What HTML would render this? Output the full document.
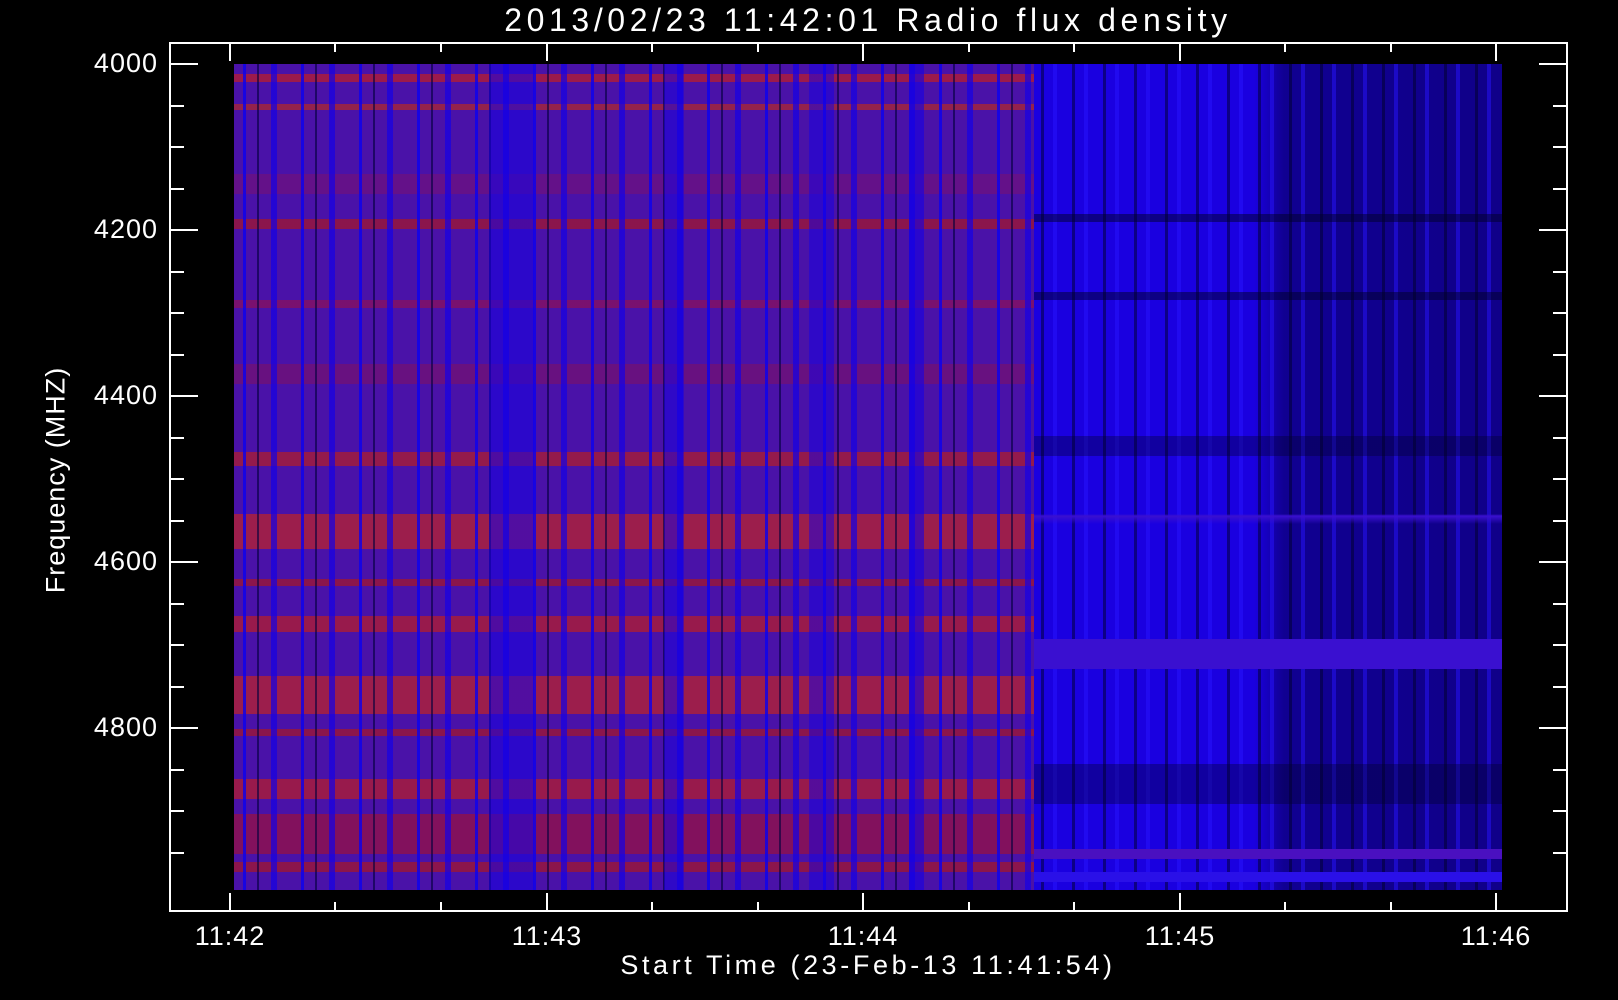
<!DOCTYPE html>
<html><head><meta charset="utf-8"><style>
html,body{margin:0;padding:0;background:#000;width:1618px;height:1000px;overflow:hidden;font-family:"Liberation Sans",sans-serif;color:#fff}
.t{position:absolute;white-space:nowrap;font-size:27px;letter-spacing:1px}
#img{position:absolute;left:234px;top:64px;width:1268px;height:826px;overflow:hidden;background:#3e10c0}
#L{position:absolute;left:0;top:0;width:800px;height:826px;background:#4a12a8}
#R{position:absolute;left:800px;top:0;width:468px;height:826px;background:#1a00e0}
.lay{position:absolute;left:0;top:0;width:100%;height:100%}
</style></head><body>
<div class="t" style="left:0;width:1736px;text-align:center;top:2px;font-size:32px;letter-spacing:4.6px">2013/02/23 11:42:01 Radio flux density</div>

<div id="img">
 <div id="L">
  <div class="lay" style="background:linear-gradient(180deg,transparent 0,transparent 10px,#e02000 10px,#e02000 18px,transparent 18px,transparent 40px,#d03000 40px,#d03000 46px,transparent 46px,transparent 110px,#7a1070 110px,#7a1070 130px,transparent 130px,transparent 155px,#c01800 155px,#c01800 165px,transparent 165px,transparent 236px,#a01040 236px,#a01040 244px,transparent 244px,transparent 300px,#801060 300px,#801060 320px,transparent 320px,transparent 388px,#d02000 388px,#d02000 402px,transparent 402px,transparent 450px,#e02800 450px,#e02800 485px,transparent 485px,transparent 515px,#c01800 515px,#c01800 522px,transparent 522px,transparent 552px,#d82000 552px,#d82000 568px,transparent 568px,transparent 612px,#e02800 612px,#e02800 650px,transparent 650px,transparent 665px,#c01800 665px,#c01800 672px,transparent 672px,transparent 715px,#d82000 715px,#d82000 735px,transparent 735px,transparent 750px,#b01020 750px,#b01020 790px,transparent 790px,transparent 798px,#c01800 798px,#c01800 808px,transparent 808px);opacity:.55"></div>
  <div class="lay" style="background:repeating-linear-gradient(90deg,transparent 0,transparent 9px,rgba(10,0,240,.8) 9px,rgba(10,0,240,.8) 12px,transparent 12px,transparent 23px,rgba(0,0,60,.6) 23px,rgba(0,0,60,.6) 25px,transparent 25px,transparent 37px,rgba(20,0,230,.7) 37px,rgba(20,0,230,.7) 43px,transparent 43px,transparent 58px)"></div>
  <div class="lay" style="background:linear-gradient(90deg,transparent 0,transparent 255px,rgba(20,0,230,.55) 255px,rgba(20,0,230,.55) 300px,transparent 300px,transparent 430px,rgba(20,0,230,.5) 430px,rgba(20,0,230,.5) 450px,transparent 450px,transparent 575px,rgba(20,0,230,.5) 575px,rgba(20,0,230,.5) 600px,transparent 600px,transparent 675px,rgba(20,0,230,.6) 675px,rgba(20,0,230,.6) 690px,transparent 690px)"></div>
 </div>
 <div id="R">
  <div class="lay" style="background:linear-gradient(90deg,transparent 0,transparent 220px,rgba(5,0,50,.45) 250px,rgba(5,0,50,.5) 468px)"></div>
  <div class="lay" style="background:repeating-linear-gradient(90deg,transparent 0,transparent 7px,rgba(0,0,40,.5) 7px,rgba(0,0,40,.5) 10px,transparent 10px,transparent 19px,rgba(40,20,255,.5) 19px,rgba(40,20,255,.5) 23px,transparent 23px,transparent 31px)"></div>
  <div class="lay" style="background:linear-gradient(180deg,transparent 0,transparent 150px,rgba(0,0,40,.5) 150px,rgba(0,0,40,.5) 158px,transparent 158px,transparent 228px,rgba(0,0,40,.5) 228px,rgba(0,0,40,.5) 236px,transparent 236px,transparent 372px,rgba(0,0,40,.35) 372px,rgba(0,0,40,.35) 392px,transparent 392px,transparent 450px,#3a10d0 452px,transparent 460px,transparent 575px,#3a10d0 575px,#3a10d0 605px,transparent 605px,transparent 700px,rgba(0,0,40,.35) 700px,rgba(0,0,40,.35) 740px,transparent 740px,transparent 785px,#4a10c0 785px,#4a10c0 795px,transparent 795px,transparent 808px,#2a10e8 808px,#2a10e8 818px,transparent 818px)"></div>
 </div>
</div>

<svg width="1618" height="1000" style="position:absolute;left:0;top:0">
<g stroke="#fff" stroke-width="2" fill="none">
<rect x="170" y="43" width="1397" height="868"/>
<path d="M170 64h28M170 230h28M170 396h28M170 562h28M170 728h28M1567 64h-28M1567 230h-28M1567 396h-28M1567 562h-28M1567 728h-28
M170 106h14M170 147h14M170 189h14M170 272h14M170 313h14M170 355h14M170 438h14M170 479h14M170 521h14M170 604h14M170 645h14M170 687h14M170 770h14M170 811h14M170 853h14
M1567 106h-14M1567 147h-14M1567 189h-14M1567 272h-14M1567 313h-14M1567 355h-14M1567 438h-14M1567 479h-14M1567 521h-14M1567 604h-14M1567 645h-14M1567 687h-14M1567 770h-14M1567 811h-14M1567 853h-14
M230 43v18M547 43v18M863 43v18M1180 43v18M1496 43v18M230 911v-18M547 911v-18M863 911v-18M1180 911v-18M1496 911v-18
M335 43v9M441 43v9M652 43v9M758 43v9M969 43v9M1074 43v9M1285 43v9M1391 43v9
M335 911v-9M441 911v-9M652 911v-9M758 911v-9M969 911v-9M1074 911v-9M1285 911v-9M1391 911v-9"/>
</g></svg>

<div class="t" style="right:1460px;top:48px">4000</div>
<div class="t" style="right:1460px;top:214px">4200</div>
<div class="t" style="right:1460px;top:380px">4400</div>
<div class="t" style="right:1460px;top:546px">4600</div>
<div class="t" style="right:1460px;top:712px">4800</div>

<div class="t" style="left:180px;width:100px;text-align:center;top:921px">11:42</div>
<div class="t" style="left:497px;width:100px;text-align:center;top:921px">11:43</div>
<div class="t" style="left:813px;width:100px;text-align:center;top:921px">11:44</div>
<div class="t" style="left:1130px;width:100px;text-align:center;top:921px">11:45</div>
<div class="t" style="left:1446px;width:100px;text-align:center;top:921px">11:46</div>

<div class="t" style="left:0;width:1736px;text-align:center;top:950px;letter-spacing:3.6px">Start Time (23-Feb-13 11:41:54)</div>
<div class="t" style="left:56px;top:480px;transform:translate(-50%,-50%) rotate(-90deg)">Frequency (MHZ)</div>
</body></html>
